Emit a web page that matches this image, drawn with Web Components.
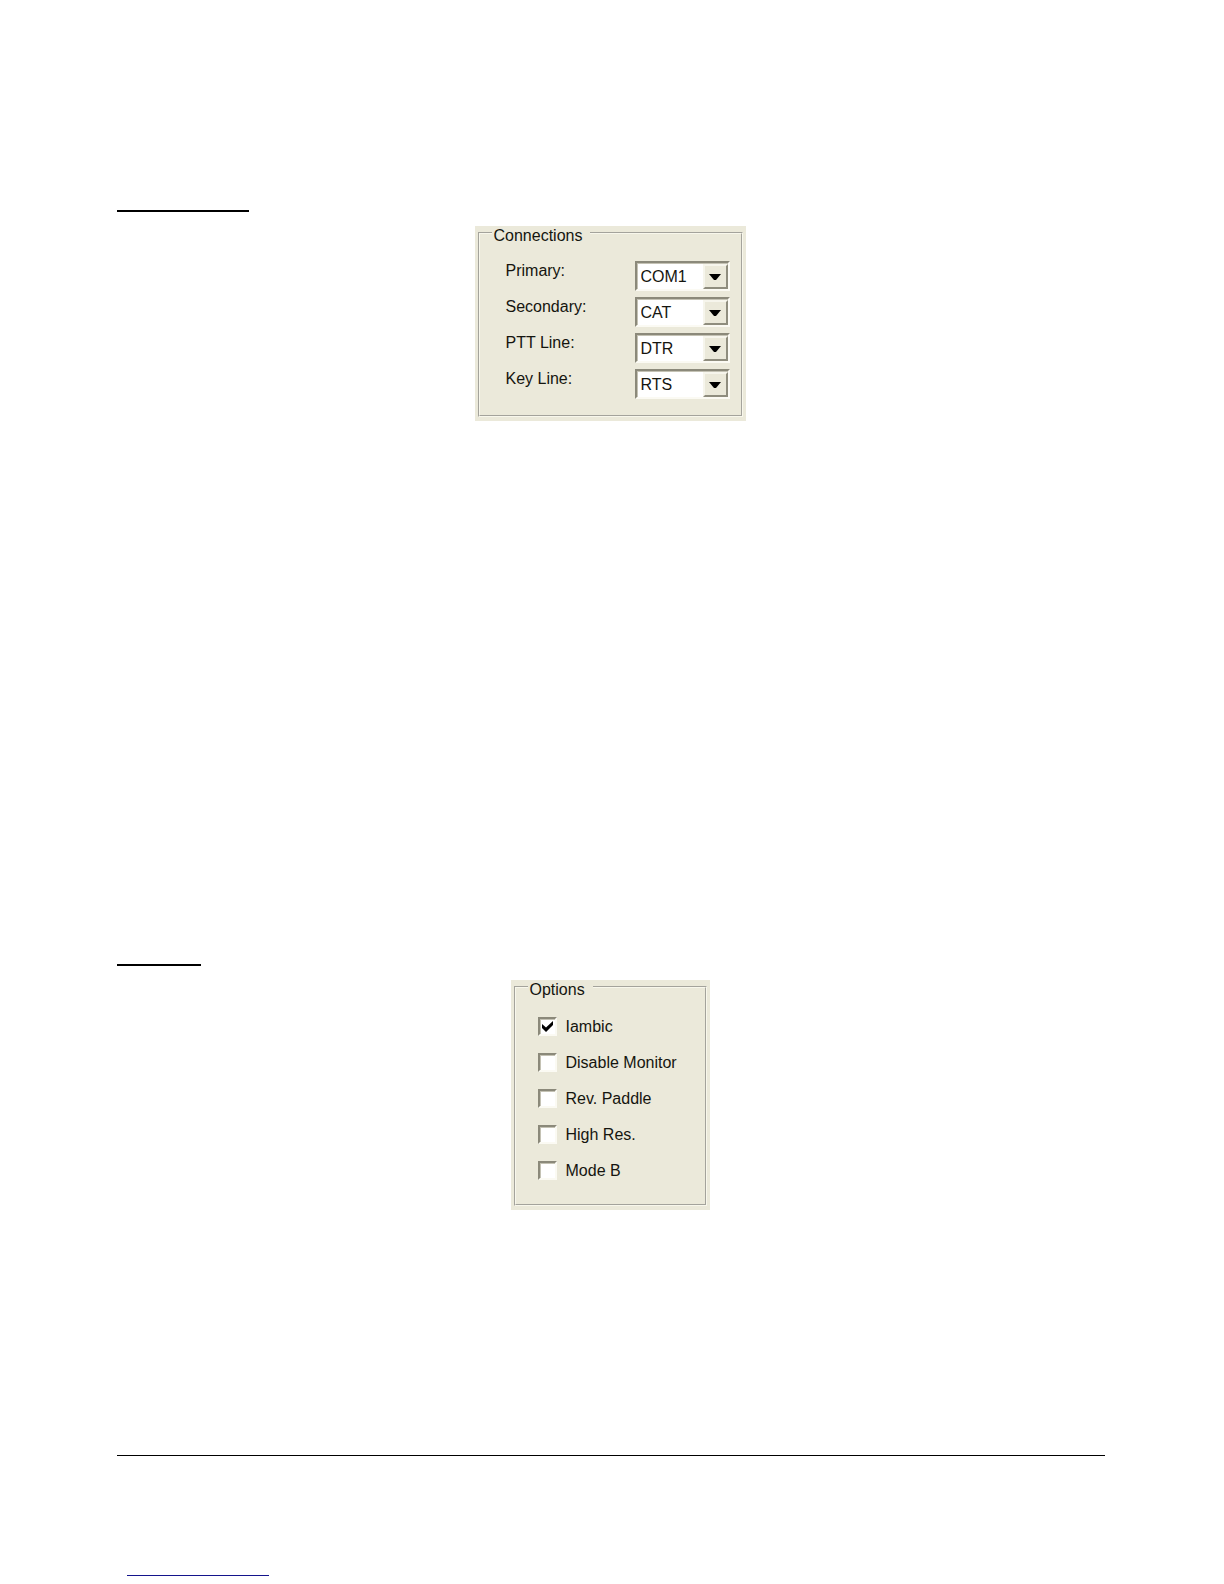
<!DOCTYPE html>
<html lang="en">
<head>
<meta charset="utf-8">
<meta name="viewport" content="width=device-width, initial-scale=1">
<title>Keyer Setup</title>
<style>
body {
    margin: 0;
    background: #fff;
    color: #15150f;
    font: 16px/20px "Liberation Sans", Arial, sans-serif;
}
</style>
</head>
<body>
<manual-page>
    <manual-section style="--rule: 132px">
        <group-box legend="Connections" style="--box-width: 271px">
            <combo-row label="Primary:" value="COM1"></combo-row>
            <combo-row label="Secondary:" value="CAT"></combo-row>
            <combo-row label="PTT Line:" value="DTR"></combo-row>
            <combo-row label="Key Line:" value="RTS"></combo-row>
        </group-box>
    </manual-section>
    <manual-section style="--rule: 84px">
        <group-box legend="Options" style="--box-width: 199px; --top: 24px; --inset: 10px; --bottom: 13px">
            <check-row label="Iambic" checked></check-row>
            <check-row label="Disable Monitor"></check-row>
            <check-row label="Rev. Paddle"></check-row>
            <check-row label="High Res."></check-row>
            <check-row label="Mode B"></check-row>
        </group-box>
    </manual-section>
</manual-page>

<script>
const pageTemplate = document.createElement("template");
pageTemplate.innerHTML = `
    <style>
    :host {
        display: flex;
        flex-direction: column;
        box-sizing: border-box;
        min-height: 100vh;
        padding: 210px 119px 0 117px;
    }

    main {
        display: flex;
        flex-direction: column;
        gap: 543px;
        padding-right: 2px;
    }

    footer {
        margin-top: auto;
        padding: 119px 10px 8px;
        border-top: 1px solid #000;
    }

    .link-line {
        width: 142px;
        height: 1px;
        background: #14148c;
    }
    </style>
    <main><slot></slot></main>
    <footer><div class="link-line"></div></footer>
`;
class ManualPage extends HTMLElement {
  constructor() {
    super();
    this.attachShadow({ mode: "open" });
    this.shadowRoot.append(pageTemplate.content.cloneNode(true));
  }
}

// a short heading rule with a centred figure under it
const sectionTemplate = document.createElement("template");
sectionTemplate.innerHTML = `
    <style>
    :host {
        display: flex;
        flex-direction: column;
        align-items: center;
        gap: 14px;
    }

    .rule {
        align-self: flex-start;
        width: var(--rule);
        height: 2px;
        background: #000;
    }
    </style>
    <div class="rule"></div>
    <slot></slot>
`;
class ManualSection extends HTMLElement {
  constructor() {
    super();
    this.attachShadow({ mode: "open" });
    this.shadowRoot.append(sectionTemplate.content.cloneNode(true));
  }
}

const groupTemplate = document.createElement("template");
groupTemplate.innerHTML = `
    <style>
    :host {
        display: block;
        box-sizing: border-box;
        width: var(--box-width);
        padding: 0 3px 4px;
        background: #ebe9da;
    }

    fieldset {
        margin: 0;
        min-width: 0;
        padding: 0 11px var(--bottom, 16px) 12px;
        border: 2px groove #f8f7ec;
    }

    /* the legend hangs a little below the frame line */
    legend {
        height: 13px;
        line-height: 19px;
        padding: 0 8px 0 2px;
    }

    .rows {
        display: flex;
        flex-direction: column;
        gap: 6px;
        padding: var(--top, 22px) 0 0 var(--inset, 14px);
    }
    </style>
    <fieldset>
        <legend></legend>
        <div class="rows"><slot></slot></div>
    </fieldset>
`;
class GroupBox extends HTMLElement {
  constructor() {
    super();
    this.attachShadow({ mode: "open" });
    this.shadowRoot.append(groupTemplate.content.cloneNode(true));
    this.shadowRoot.querySelector("legend").textContent = this.getAttribute("legend");
  }
}

const comboTemplate = document.createElement("template");
comboTemplate.innerHTML = `
    <style>
    :host {
        display: flex;
        justify-content: space-between;
        align-items: flex-start;
    }

    .combo {
        display: grid;
        grid-template-columns: 1fr 25px;
        box-sizing: border-box;
        width: 95px;
        height: 30px;
        border: 2px solid;
        border-color: #8b897a #fbfaf3 #fbfaf3 #8b897a;
        box-shadow: inset 1px 1px #c4c2b4;
        background: #fff;
    }

    select {
        grid-area: 1 / 1 / 2 / 3;
        appearance: none;
        width: 100%;
        margin: 0;
        padding: 2px 0 0 4px;
        border: 0;
        background: transparent;
        color: inherit;
        font: inherit;
    }

    .arrow {
        grid-area: 1 / 2;
        display: flex;
        align-items: center;
        justify-content: center;
        margin-top: 1px;
        border: 2px solid;
        border-color: #f6f5ec #8f8d7e #8f8d7e #f6f5ec;
        background: #ebe9da;
        pointer-events: none;
    }
    </style>
    <label for="combo"></label>
    <span class="combo">
        <select id="combo"><option></option></select>
        <span class="arrow">
            <svg width="12" height="6" viewBox="0 0 12 6"><path d="M0 0h12L7 6H5z" fill="#000"/></svg>
        </span>
    </span>
`;
class ComboRow extends HTMLElement {
  constructor() {
    super();
    this.attachShadow({ mode: "open" });
    this.shadowRoot.append(comboTemplate.content.cloneNode(true));
    this.shadowRoot.querySelector("label").textContent = this.getAttribute("label");
    this.shadowRoot.querySelector("option").textContent = this.getAttribute("value");
  }
}

const checkTemplate = document.createElement("template");
checkTemplate.innerHTML = `
    <style>
    :host {
        display: block;
    }

    label {
        display: flex;
        align-items: flex-start;
        gap: 9px;
        height: 30px;
    }

    .box {
        display: grid;
        width: 19px;
        height: 19px;
    }

    input {
        grid-area: 1 / 1;
        appearance: none;
        box-sizing: border-box;
        width: 19px;
        height: 19px;
        margin: 0;
        border: 2px solid;
        border-color: #8b897a #fbfaf3 #fbfaf3 #8b897a;
        box-shadow: inset 1px 1px #c4c2b4;
        background: #fff;
    }

    svg {
        grid-area: 1 / 1;
        visibility: hidden;
        pointer-events: none;
    }

    input:checked + svg {
        visibility: visible;
    }
    </style>
    <label>
        <span class="box">
            <input type="checkbox">
            <svg width="19" height="19" viewBox="0 0 19 19"><path d="M4 7l4 3.5L15 4v4l-7 7-4-4z" fill="#000"/></svg>
        </span>
        <span class="text"></span>
    </label>
`;
class CheckRow extends HTMLElement {
  constructor() {
    super();
    this.attachShadow({ mode: "open" });
    this.shadowRoot.append(checkTemplate.content.cloneNode(true));
    this.shadowRoot.querySelector(".text").textContent = this.getAttribute("label");
    this.shadowRoot.querySelector("input").checked = this.hasAttribute("checked");
  }
}

window.customElements.define("manual-page", ManualPage);
window.customElements.define("manual-section", ManualSection);
window.customElements.define("group-box", GroupBox);
window.customElements.define("combo-row", ComboRow);
window.customElements.define("check-row", CheckRow);
</script>
</body>
</html>
